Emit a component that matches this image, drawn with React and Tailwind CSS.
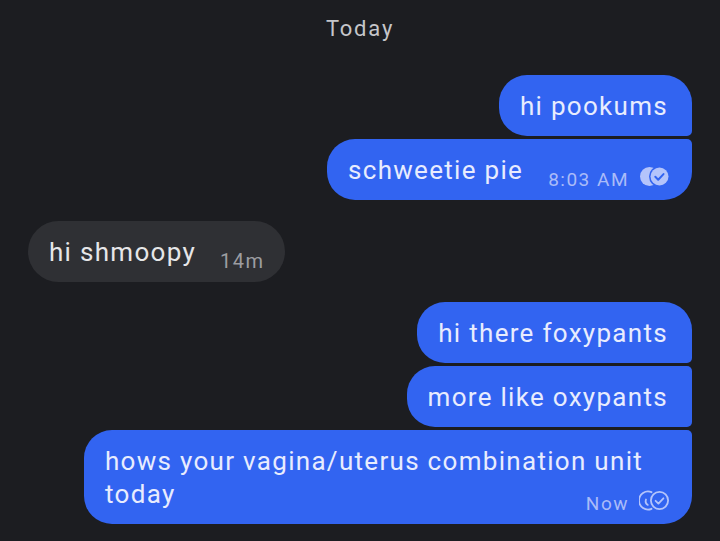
import React from 'react';

const font = { fontFamily: 'Roboto, "Noto Sans", sans-serif' };

const ReadIcon = ({ filled }) => (
  <svg width="31" height="21" viewBox="0 0 31 21" fill="none">
    {filled ? (
      <>
        <circle cx="10.5" cy="10.5" r="9.5" fill="#b4c4fb" />
        <circle cx="20.5" cy="10.5" r="10.5" fill="#3264f1" />
        <circle cx="20.5" cy="10.5" r="9" fill="#b4c4fb" />
        <path d="M16.3 10.8l2.9 2.9 5.3-5.6" stroke="#3264f1" strokeWidth="2" strokeLinecap="round" strokeLinejoin="round" />
      </>
    ) : (
      <>
        <path d="M12.5 2.2A9 9 0 1 0 12.5 18.8" stroke="#b4c4fb" strokeWidth="1.8" strokeLinecap="round" />
        <path d="M7 9.5a4.5 4.5 0 0 0 1.8 5.4" stroke="#b4c4fb" strokeWidth="1.8" strokeLinecap="round" />
        <circle cx="20.5" cy="10.5" r="8.6" stroke="#b4c4fb" strokeWidth="1.8" />
        <path d="M16.6 10.8l2.8 2.8 5-5.3" stroke="#b4c4fb" strokeWidth="1.8" strokeLinecap="round" strokeLinejoin="round" />
      </>
    )}
  </svg>
);

const Sent = ({ children, className }) => (
  <div className={`w-fit max-w-[608px] bg-[#3264f1] text-[#e8ecfe] text-[26px] leading-[33px] tracking-[1.3px] pl-[21px] pt-[15px] pb-[13px] ${className}`}>
    {children}
  </div>
);

const Meta = ({ children, className }) => (
  <span className={`text-[19px] leading-[19px] tracking-[1.5px] translate-y-[2px] ${className}`}>{children}</span>
);

export default function App() {
  return (
    <div className="min-h-screen bg-[#1c1d21] px-[28px] pt-[14px] pb-6" style={font}>
      <p className="text-center text-[22px] leading-[30px] tracking-[1.8px] text-[#c5c6ca]">Today</p>

      <div className="mt-[31px] flex flex-col items-end gap-[3px]">
        <Sent className="pr-[24px] rounded-[28px] rounded-br-[5px]">hi pookums</Sent>
        <Sent className="pr-[22px] rounded-[28px] rounded-tr-[5px]">
          <div className="flex items-end">
            <span>schweetie pie</span>
            <span className="ml-[25px] flex items-end">
              <Meta className="text-[#aabbf8]">8:03 AM</Meta>
            </span>
            <span className="ml-[10px] flex"><ReadIcon filled /></span>
          </div>
        </Sent>
      </div>

      <div className="mt-[21px] flex">
        <div className="w-fit rounded-[31px] bg-[#2f3034] pl-[21px] pr-[20px] pt-[15px] pb-[13px] text-[26px] leading-[33px] tracking-[1.3px] text-[#e6e6e8]">
          <div className="flex items-end">
            <span>hi shmoopy</span>
            <span className="ml-[24px] flex items-end">
              <Meta className="text-[#9c9da1] text-[20px]">14m</Meta>
            </span>
          </div>
        </div>
      </div>

      <div className="mt-[20px] flex flex-col items-end gap-[3px]">
        <Sent className="pr-[24px] rounded-[28px] rounded-br-[5px]">hi there foxypants</Sent>
        <Sent className="pr-[24px] rounded-[28px] rounded-r-[5px]">more like oxypants</Sent>
        <Sent className="pr-[22px] rounded-[28px] rounded-tr-[5px]">
          <div className="grid">
            <p className="col-start-1 row-start-1">hows your vagina/uterus combination unit today</p>
            <div className="col-start-1 row-start-1 self-end justify-self-end flex items-end">
              <Meta className="text-[#aabbf8]">Now</Meta>
              <span className="ml-[10px] flex"><ReadIcon /></span>
            </div>
          </div>
        </Sent>
      </div>
    </div>
  );
}
